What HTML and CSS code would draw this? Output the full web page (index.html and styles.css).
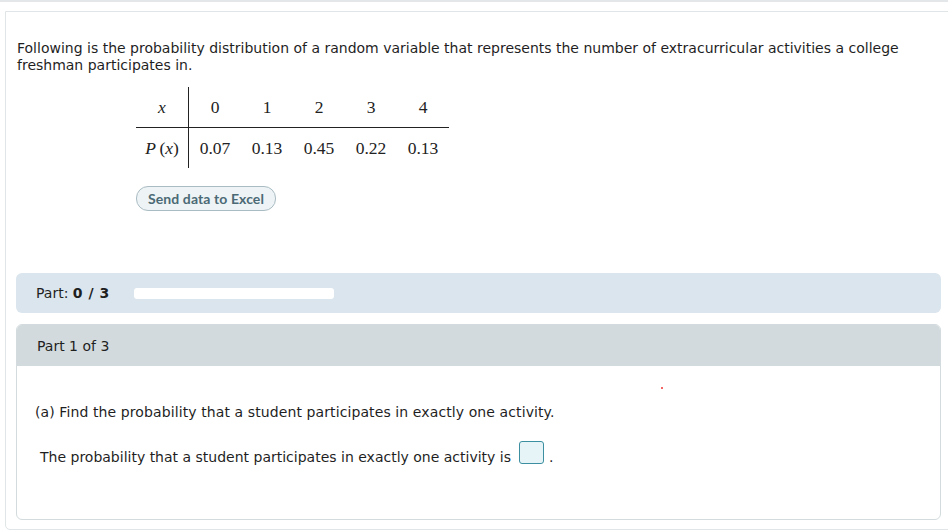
FILE: index.html
```html
<!DOCTYPE html>
<html>
<head>
<meta charset="utf-8">
<link rel="stylesheet" href="styles.css">
</head>
<body>
<div class="topline"></div>
<div class="card">
  <p class="intro">Following is the probability distribution of a random variable that represents the number of extracurricular activities a college freshman participates in.</p>
  <table class="dist">
    <tr class="r1">
      <td class="hd"><i>x</i></td>
      <td>0</td><td>1</td><td>2</td><td>3</td><td>4</td>
    </tr>
    <tr class="r2">
      <td class="hd"><i>P</i>&thinsp;(<i>x</i>)</td>
      <td>0.07</td><td>0.13</td><td>0.45</td><td>0.22</td><td>0.13</td>
    </tr>
  </table>
  <div class="btnrow"><button class="excel">Send data to Excel</button></div>
  <div class="partbar">
    <span class="plabel">Part: <b>0 / 3</b></span>
    <span class="progress"></span>
  </div>
  <div class="part">
    <div class="parthead">Part 1 of 3</div>
    <div class="partbody">
      <span class="dot"></span>
      <p class="q">(a) Find the probability that a student participates in exactly one activity.</p>
      <p class="ans">The probability that a student participates in exactly one activity is<span class="inbox"></span>.</p>
    </div>
  </div>
</div>
</body>
</html>
```

FILE: styles.css
```css
html, body {
  margin: 0;
  padding: 0;
  background: #fff;
  overflow: hidden;
}
body {
  font-family: "DejaVu Sans", Verdana, sans-serif;
  font-size: 14px;
  color: #1f1f1f;
  width: 948px;
  height: 531px;
}
.topline {
  height: 0;
  border-bottom: 2px solid #e3e7e9;
}
.card {
  margin: 9px 0 0 5px;
  width: 925px;
  padding: 28px 10px 10px 10px;
  border: 1px solid #e0e5e7;
  border-radius: 0 0 5px 5px;
  height: 479px;
}
.intro {
  margin: 0 0 0 1px;
  line-height: 17px;
  width: 900px;
}
.dist {
  border-collapse: collapse;
  margin: 13px 0 0 120px;
  font-family: "Liberation Serif", "Times New Roman", serif;
  font-size: 17.5px;
  color: #222;
}
.dist td {
  width: 52px;
  height: 40px;
  padding: 0;
  text-align: center;
  vertical-align: middle;
}
.dist .hd {
  border-right: 1px solid #222;
}
.dist .r1 td {
  border-bottom: 1px solid #222;
}
.btnrow {
  margin: 18px 0 0 120px;
}
.excel {
  font-family: Lato, "Open Sans", sans-serif;
  font-weight: 700;
  font-size: 14px;
  letter-spacing: 0.1px;
  color: #4b6a75;
  background: #eef3f5;
  border: 1px solid #a9bcc3;
  border-radius: 12px;
  height: 25px;
  width: 140px;
  padding: 0;
  display: block;
}
.partbar {
  margin-top: 62px;
  height: 40px;
  background: #dae5ee;
  border-radius: 6px;
  display: flex;
  align-items: center;
  padding-left: 20px;
  gap: 20px;
}
.plabel { width: 78px; white-space: nowrap; }
.plabel b { font-weight: 700; word-spacing: 1px; }
.progress {
  width: 200px;
  height: 11px;
  background: #fff;
  border-radius: 3px;
}
.part {
  margin-top: 11px;
  border: 1px solid #d3dbde;
  border-radius: 6px;
  overflow: hidden;
  height: 194px;
}
.parthead {
  background: #d2dadd;
  height: 41px;
  display: flex;
  align-items: center;
  padding-left: 20px;
}
.partbody {
  position: relative;
  padding: 38px 18px 0 18px;
}
.dot {
  position: absolute;
  left: 644px;
  top: 21px;
  width: 2px;
  height: 2px;
  background: #e33;
  border-radius: 1px;
}
.q {
  margin: 0;
  line-height: 17px;
  letter-spacing: 0.1px;
}
.ans {
  margin: 20px 0 0 5px;
  line-height: 17px;
}
.inbox {
  display: inline-block;
  width: 23px;
  height: 21px;
  border: 1px solid #3c8fa1;
  background: #e6f4f8;
  border-radius: 3px;
  margin: 0 5px 0 8px;
  vertical-align: -2px;
}
```
